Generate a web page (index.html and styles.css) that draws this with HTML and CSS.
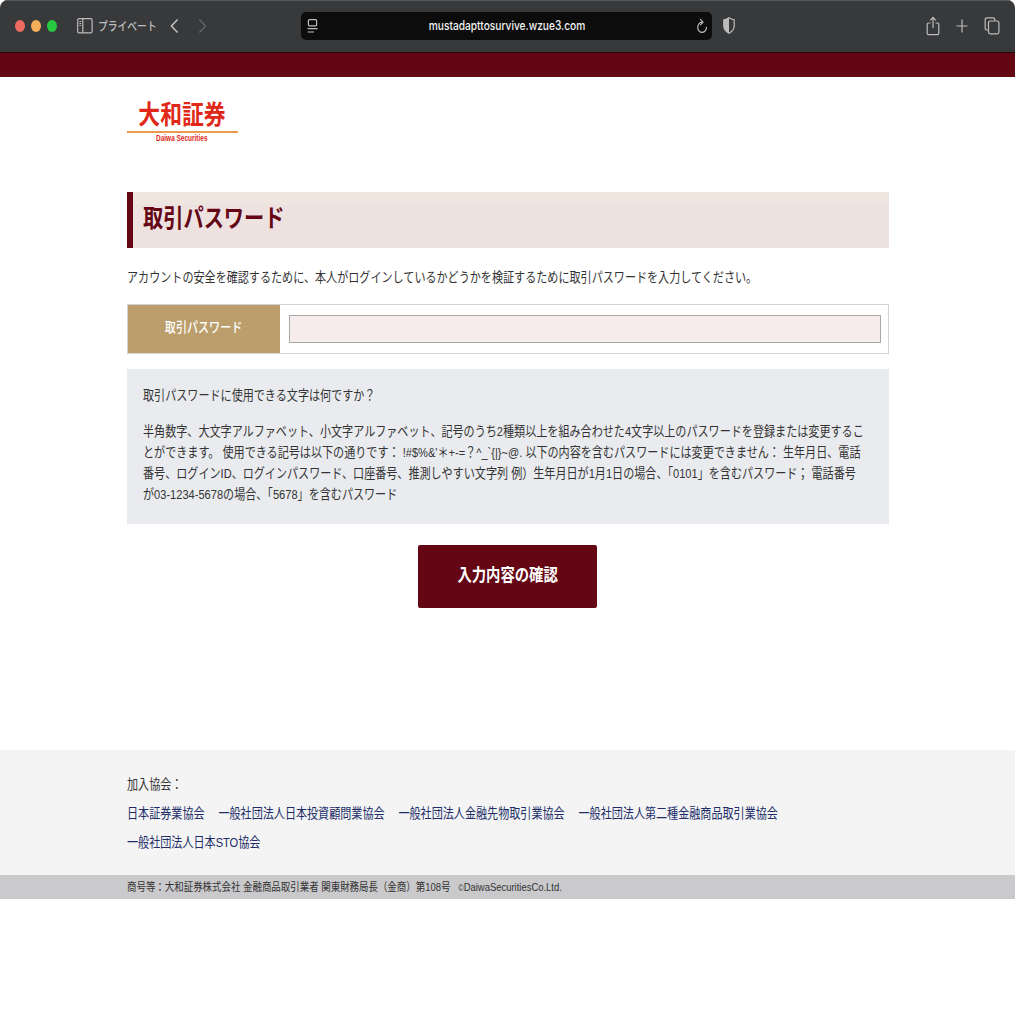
FILE: index.html
```html
<!DOCTYPE html>
<html lang="ja">
<head>
  <meta charset="UTF-8" />
  <title>取引パスワード</title>
  <link rel="stylesheet" href="styles.css">
</head>
<body>
<div class="window">

<div class="toolbar">
  <div class="lights"><i class="red"></i><i class="yellow"></i><i class="green"></i></div>
  <svg class="sidebar-icon" width="16" height="16" viewBox="0 0 16 16"><rect x=".7" y=".7" width="14.4" height="14.2" rx="1.5"/><path d="M5.8 1v14M2.4 3.5h1.8M2.4 5.5h1.8M2.4 7.5h1.8"/></svg>
  <div class="private"><span>プライベート</span></div>
  <svg class="back" width="9" height="16" viewBox="0 0 9 16"><path d="M7.6 1.5L1.4 8l6.2 6.5"/></svg>
  <svg class="forward" width="9" height="16" viewBox="0 0 9 16"><path d="M1.4 1.5L7.6 8l-6.2 6.5"/></svg>
  <div class="address">
    <svg width="12" height="16" viewBox="0 0 12 16"><rect x="1.4" y="1.6" width="8.2" height="6.2" rx="1"/><path d="M.6 10.7h10M.6 14h6.5"/></svg>
    <div class="url"><span>mustadapttosurvive.wzue3.com</span></div>
    <svg width="12" height="16" viewBox="0 0 12 16"><path d="M6 4.2A4.4 5.1 0 1 0 10.5 9M4.2 1.2L7 4.2 4.2 7.1"/></svg>
  </div>
  <svg class="shield" width="12" height="17" viewBox="0 0 12 17"><path d="M6 .8Q8 2.3 11.2 2.8V9q0 4.5-5.2 7.2Q.8 13.500.8 9V2.800Q4 2.300 6 .8z"/><path class="half" d="M6 .8v15.400Q.8 13.500.8 9V2.800Q4 2.300 6 .8z"/></svg>
  <div class="tools">
    <svg width="14" height="20" viewBox="0 0 14 20"><path d="M4.500 7H2.500Q1.200 7 1.200 8.400v8.800q0 1.400 1.300 1.400h9q1.300 0 1.300-1.400V8.400Q12.800 7 11.500 7h-2M7 12V1.300M4.200 4.400L7 1.300l2.800 3.100"/></svg>
    <svg width="12" height="14" viewBox="0 0 12 14"><path d="M6 .5v13M.5 7h11"/></svg>
    <svg width="16" height="18" viewBox="0 0 16 18"><path d="M4 13H3q-1.800 0-1.800-1.800V2.600Q1.200.8 3 .8h6q1.800 0 1.800 1.800v1.200"/><rect x="4.500" y="4" width="10.400" height="12.800" rx="1.800"/></svg>
  </div>
</div>

<div class="topline"></div>

<div class="container">
  <div class="logo">
    <div class="logo-ja"><span>大和証券</span></div>
    <div class="logo-en"><span>Daiwa Securities</span></div>
  </div>

  <h1><span>取引パスワード</span></h1>

  <p class="intro"><span>アカウントの安全を確認するために、本人がログインしているかどうかを検証するために取引パスワードを入力してください。</span></p>

  <div class="row">
    <div class="label"><span>取引パスワード</span></div>
    <div class="field"><div class="box"></div></div>
  </div>

  <div class="note">
    <p class="question"><span>取引パスワードに使用できる文字は何ですか？</span></p>
    <p><span>半角数字、大文字アルファベット、小文字アルファベット、記号のうち2種類以上を組み合わせた4文字以上のパスワードを登録または変更するこ</span></p>
    <p><span class="symbols">とができます。 使用できる記号は以下の通りです： !#$%&amp;'＊+-=？^_`{|}~@. 以下の内容を含むパスワードには変更できません： 生年月日、電話</span></p>
    <p><span class="example">番号、ログインID、ログインパスワード、口座番号、推測しやすい文字列 例）生年月日が1月1日の場合、「0101」を含むパスワード； 電話番号</span></p>
    <p><span>が03-1234-5678の場合、「5678」を含むパスワード</span></p>
  </div>

  <div class="confirm"><span>入力内容の確認</span></div>
</div>

<div class="footer">
  <div class="inner">
    <p><span>加入協会：</span></p>
    <div class="links">
      <b>日本証券業協会</b><b>一般社団法人日本投資顧問業協会</b><b>一般社団法人金融先物取引業協会</b><b>一般社団法人第二種金融商品取引業協会</b>
    </div>
    <div class="links"><b>一般社団法人日本STO協会</b></div>
  </div>
</div>
<div class="copyright">
  <div class="inner"><span>商号等：大和証券株式会社 金融商品取引業者 関東財務局長（金商）第108号 &nbsp; <small>©</small>DaiwaSecuritiesCo.Ltd.</span></div>
</div>

</div>
</body>
</html>
```
FILE: styles.css
```css
* { box-sizing: border-box; }
body {
  margin: 0;
  background: #fff;
  font-family: 'Liberation Sans', 'Noto Sans CJK JP', sans-serif;
  font-size: 13.6px;
  color: #333;
}
p, h1 { margin: 0; }
/* condensed lettering */
span, .links {
  display: inline-block;
  white-space: nowrap;
  transform: scaleX(0.815);
  transform-origin: left center;
}
.window {
  height: 1015px;
  overflow: hidden;
  border-radius: 8px 8px 16px 16px;
}
svg {
  display: block;
  flex: none;
  fill: none;
  stroke: #bdbdbe;
  stroke-width: 1.2;
}
.toolbar {
  height: 53px;
  background: #38393b;
  border-top: 1px solid #58595b;
  border-bottom: 1px solid #240509;
  display: flex;
  align-items: center;
  padding: 0 15px 2px;
}
.lights {
  display: flex;
  gap: 6px;
}
.lights i {
  width: 10px;
  height: 12px;
  border-radius: 50%;
}
.red { background: #ed6b60; }
.yellow { background: #f5ae5a; }
.green { background: #28c840; }
.sidebar-icon { margin-left: 20px; }
.private {
  width: 58px;
  margin-left: 5px;
  font-size: 12px;
  font-weight: 500;
  color: #bdbdbe;
}
.back {
  margin-left: 14px;
  stroke-width: 1.6;
}
.forward {
  margin-left: 19px;
  stroke: #68696b;
}
.address {
  width: 411px;
  height: 28px;
  margin-left: 94px;
  padding: 0 4px 0 6px;
  border-radius: 5px;
  background: #0c0c0d;
  display: flex;
  align-items: center;
}
.url {
  flex: 1;
  text-align: center;
  font-family: Inter, sans-serif;
  font-size: 12.5px;
  font-weight: 500;
  color: #f2f2f2;
}
.url span, .label span, .confirm span, .logo span { transform-origin: center; }
.shield { margin-left: 11px; }
.shield .half {
  fill: #bdbdbe;
  stroke: none;
}
.tools {
  margin-left: auto;
  display: flex;
  align-items: center;
  gap: 16px;
}
.topline {
  height: 24px;
  background: #640614;
}
.container {
  width: 762px;
  height: 673px;
  margin: 0 auto;
  padding-top: 23px;
}
.logo {
  width: 111px;
  height: 92px;
  text-align: center;
  color: #df2818;
}
.logo-ja {
  height: 33px;
  border-bottom: 2px solid #e99a4b;
  line-height: 31px;
  font-size: 26px;
  font-weight: bold;
}
.logo-ja span { transform: scaleX(0.84); }
.logo-en {
  font-size: 9px;
  line-height: 11px;
  font-weight: bold;
}
.logo-en span { transform: scaleX(0.72); }
h1 {
  height: 56px;
  padding-left: 10px;
  border-left: 6px solid #640614;
  background: linear-gradient(#efe6df 22%, #eee2e1 23%);
  font-size: 24.8px;
  line-height: 53px;
  color: #640614;
}
.intro {
  height: 56px;
  line-height: 59px;
}
.row {
  height: 50px;
  display: flex;
  border: 1px solid #d3d3d6;
}
.label {
  width: 152px;
  background: #bb9e6c;
  color: #fff;
  text-align: center;
  line-height: 46px;
  font-weight: 500;
}
.field {
  flex: 1;
  padding: 10px 7px 0 9px;
}
.box {
  height: 28px;
  border: 1px solid #a9a7a8;
  background: #f7ecec;
}
.note {
  height: 155px;
  margin-top: 15px;
  padding: 16px 0 0 16px;
  background: #e9ebef;
  line-height: 21px;
}
.note p { height: 21px; }
.note .question { margin-bottom: 15px; }
.confirm {
  width: 179px;
  height: 63px;
  margin: 21px auto 0;
  border-radius: 2px;
  background: #640614;
  color: #fff;
  font-size: 17.6px;
  font-weight: bold;
  line-height: 61px;
  text-align: center;
}
.footer {
  height: 125px;
  padding-top: 20px;
  background: #f4f4f4;
  line-height: 29px;
}
.inner {
  width: 762px;
  margin: 0 auto;
}
.footer p { height: 29px; }
.links {
  display: flex;
  gap: 17px;
  height: 29px;
  color: #202c68;
}
.links b { font-weight: normal; }
.copyright {
  height: 24px;
  background: #cacacc;
  font-size: 11.6px;
  line-height: 23px;
}
.copyright small { font-size: 9px; }
```
